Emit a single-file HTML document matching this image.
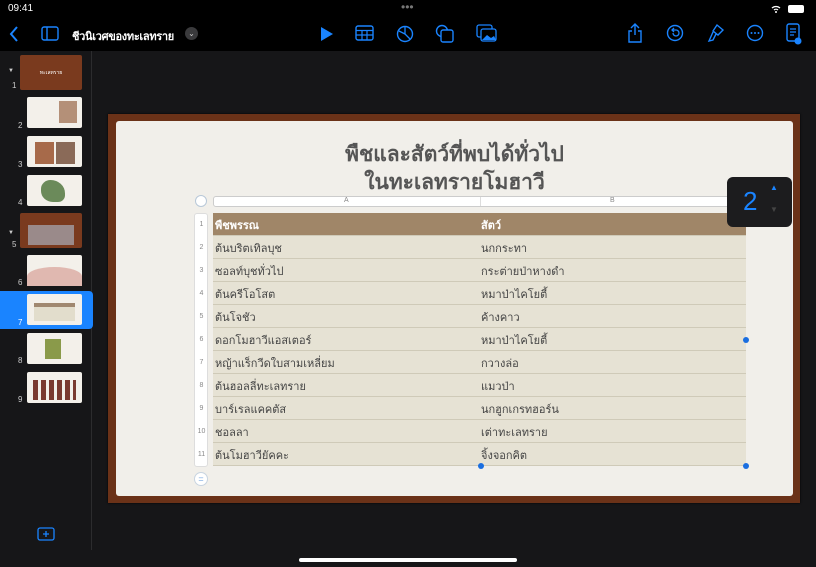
<!DOCTYPE html>
<html><head><meta charset="utf-8"><style>
*{margin:0;padding:0;box-sizing:border-box}
body{width:816px;height:567px;background:#161618;position:relative;overflow:hidden;font-family:"Liberation Sans",sans-serif;color:#fff}
.top{position:absolute;left:0;top:0;width:816px;height:51px;background:#000}
.t{position:absolute;font-size:10px;color:#fff}
.ic{position:absolute;top:25px}
.side{position:absolute;left:0;top:51px;width:92px;height:499px;background:#161618;border-right:1px solid #2c2c2e}
.th{position:absolute;border-radius:2px;background:#f3f0ea}
.num{position:absolute;font-size:8px;color:#ccc}
.sel{position:absolute;left:0;top:291px;width:93px;height:38px;background:#1a84ff;border-radius:0 4px 4px 0}
.frame{position:absolute;left:108px;top:114px;width:692px;height:389px;background:#6b3218;box-shadow:0 0 2px #000}
.slide{position:absolute;left:116px;top:121px;width:677px;height:375px;background:#f1efea;border-radius:3px}
h1{position:absolute;left:116px;width:677px;text-align:center;font-size:21px;color:#555;font-weight:bold;line-height:26px}
.row{position:absolute;left:213px;width:533px;height:23px;background:#e6e2d4;border-bottom:1px solid #cfcab8;font-size:11px;color:#444}
.row span{position:absolute;top:3px}
.rn{position:absolute;left:195px;width:13px;font-size:7px;color:#888;text-align:center}
</style></head><body>
<div class="top"></div>
<div class="t" style="left:8px;top:3px">09:41</div>
<div class="t" style="left:401px;top:0px;color:#777;font-size:12px">•••</div>
<svg class="ic" style="left:770px;top:4px" width="40" height="10"><path d="M2 4a6 6 0 0 1 8 0M4 6a3 3 0 0 1 4 0" stroke="#fff" stroke-width="1.3" fill="none"/><circle cx="6" cy="8" r="1" fill="#fff"/><rect x="18" y="1" width="16" height="8" rx="2" fill="#fff"/></svg>
<svg class="ic" style="left:8px;top:25px" width="12" height="18"><path d="M9 2L3 9l6 7" stroke="#1a84ff" stroke-width="2" fill="none"/></svg>
<svg class="ic" style="left:41px;top:26px" width="18" height="15"><rect x="1" y="1" width="16" height="13" rx="2" stroke="#1a84ff" stroke-width="1.4" fill="none"/><path d="M6 1v13" stroke="#1a84ff" stroke-width="1.4"/></svg>
<div class="t" style="left:72px;top:27px;font-size:11px;font-weight:bold;letter-spacing:-0.3px">ชีวนิเวศของทะเลทราย</div>
<div style="position:absolute;left:185px;top:27px;width:13px;height:13px;border-radius:50%;background:#3a3a3c;color:#ccc;font-size:8px;text-align:center;line-height:13px">⌄</div>
<svg class="ic" style="left:320px;top:27px" width="14" height="14"><path d="M1 0L13 7L1 14z" fill="#1a84ff"/></svg>
<svg class="ic" style="left:355px;top:25px" width="20" height="17"><rect x="1" y="1" width="17" height="14" rx="2" stroke="#1a84ff" stroke-width="1.4" fill="none"/><path d="M1 5.5h17M1 10h17M7 5.5v9.5M12 5.5v9.5" stroke="#1a84ff" stroke-width="1.2"/></svg>
<svg class="ic" style="left:396px;top:25px" width="18" height="18"><circle cx="9" cy="9" r="7.5" stroke="#1a84ff" stroke-width="1.4" fill="none"/><path d="M9 1.5V9l5 5M9 9l-6 -3" stroke="#1a84ff" stroke-width="1.3" fill="none"/></svg>
<svg class="ic" style="left:435px;top:24px" width="20" height="20"><circle cx="7" cy="7" r="5.5" stroke="#1a84ff" stroke-width="1.4" fill="none"/><rect x="6" y="6" width="12" height="12" rx="2" stroke="#1a84ff" stroke-width="1.4" fill="#000"/></svg>
<svg class="ic" style="left:476px;top:24px" width="22" height="20"><rect x="1" y="1" width="15" height="12" rx="2" stroke="#1a84ff" stroke-width="1.3" fill="none"/><rect x="5" y="5" width="15" height="12" rx="2" stroke="#1a84ff" stroke-width="1.3" fill="#000"/><path d="M6 16l5-5 4 3 3-2 2 4z" fill="#1a84ff"/></svg>
<svg class="ic" style="left:627px;top:23px" width="16" height="20"><path d="M8 1v11M4 5l4-4 4 4M5 8H2v11h12V8h-3" stroke="#1a84ff" stroke-width="1.4" fill="none"/></svg>
<svg class="ic" style="left:666px;top:24px" width="18" height="18"><circle cx="9" cy="9" r="7.5" stroke="#1a84ff" stroke-width="1.4" fill="none"/><path d="M7 6h3a3 3 0 1 1-3 3M8 4L6 6l2 2" stroke="#1a84ff" stroke-width="1.3" fill="none"/></svg>
<svg class="ic" style="left:707px;top:23px" width="18" height="20"><path d="M10 2l6 5-5 5-5-4zM6 9l-4 9 4-1 3-6" stroke="#1a84ff" stroke-width="1.4" fill="none"/></svg>
<svg class="ic" style="left:746px;top:24px" width="18" height="18"><circle cx="9" cy="9" r="7.5" stroke="#1a84ff" stroke-width="1.4" fill="none"/><circle cx="5.5" cy="9" r="1" fill="#1a84ff"/><circle cx="9" cy="9" r="1" fill="#1a84ff"/><circle cx="12.5" cy="9" r="1" fill="#1a84ff"/></svg>
<svg class="ic" style="left:786px;top:23px" width="16" height="22"><rect x="1" y="1" width="12" height="17" rx="2" stroke="#1a84ff" stroke-width="1.4" fill="none"/><path d="M4 6h6M4 9h6M4 12h4" stroke="#1a84ff" stroke-width="1.2"/><circle cx="12" cy="18" r="3.5" fill="#1a84ff"/></svg>

<div class="side"></div>
<div class="sel"></div>
<div style="position:absolute;left:8px;top:68px;font-size:6px;color:#ccc">▼</div>
<div style="position:absolute;left:8px;top:230px;font-size:6px;color:#ccc">▼</div>
<div class="th" style="left:20px;top:55px;width:62px;height:35px;background:#7a3a1e"><div style="color:#fff;font-size:5px;text-align:center;margin-top:14px">ทะเลทราย</div></div>
<div class="th" style="left:27px;top:97px;width:55px;height:31px"><div style="position:absolute;left:32px;top:4px;width:18px;height:22px;background:#b49078"></div></div>
<div class="th" style="left:27px;top:136px;width:55px;height:31px"><div style="position:absolute;left:8px;top:6px;width:40px;height:22px;background:linear-gradient(90deg,#a76a4a 48%,transparent 48%,transparent 52%,#8a6a58 52%)"></div></div>
<div class="th" style="left:27px;top:175px;width:55px;height:31px"><div style="position:absolute;left:14px;top:5px;width:24px;height:22px;background:#6b8a5a;border-radius:40% 60% 30% 50%"></div></div>
<div class="th" style="left:20px;top:213px;width:62px;height:35px;background:#7a3a1e"><div style="position:absolute;left:8px;top:12px;width:46px;height:20px;background:#9a8a8a"></div></div>
<div class="th" style="left:27px;top:255px;width:55px;height:31px"><div style="position:absolute;left:0;top:12px;width:55px;height:19px;background:#e0b8b0;border-radius:50% 50% 0 0"></div></div>
<div class="th" style="left:27px;top:294px;width:55px;height:31px"><div style="position:absolute;left:7px;top:9px;width:41px;height:4px;background:#a08870"></div><div style="position:absolute;left:7px;top:13px;width:41px;height:14px;background:#e2ddcc"></div></div>
<div class="th" style="left:27px;top:333px;width:55px;height:31px"><div style="position:absolute;left:18px;top:6px;width:16px;height:20px;background:#8a9a4a"></div></div>
<div class="th" style="left:27px;top:372px;width:55px;height:31px"><div style="position:absolute;left:6px;top:8px;width:43px;height:20px;background:repeating-linear-gradient(90deg,#7a3a30 0 5px,transparent 5px 8px)"></div></div>
<div class="num" style="left:12px;top:81px">1</div><div class="num" style="left:18px;top:121px">2</div><div class="num" style="left:18px;top:160px">3</div><div class="num" style="left:18px;top:198px">4</div><div class="num" style="left:12px;top:240px">5</div><div class="num" style="left:18px;top:278px">6</div><div class="num" style="left:18px;top:318px;color:#fff">7</div><div class="num" style="left:18px;top:356px">8</div><div class="num" style="left:18px;top:395px">9</div>
<svg style="position:absolute;left:37px;top:527px" width="18" height="14"><rect x="1" y="1" width="16" height="12" rx="2" stroke="#1a84ff" stroke-width="1.3" fill="none"/><path d="M9 4v6M6 7h6" stroke="#1a84ff" stroke-width="1.3"/></svg>

<div class="frame"></div>
<div class="slide"></div>
<h1 style="top:142px">พืชและสัตว์ที่พบได้ทั่วไป</h1>
<h1 style="top:170px">ในทะเลทรายโมฮาวี</h1>
<div style="position:absolute;left:195px;top:195px;width:12px;height:12px;border-radius:50%;border:1px solid #b8c8d8;background:#fff"></div>
<div style="position:absolute;left:213px;top:196px;width:533px;height:11px;background:#fff;border:1px solid #ccc;border-radius:3px;font-size:7px;color:#888"><span style="position:absolute;left:130px">A</span><span style="position:absolute;left:396px">B</span><span style="position:absolute;left:266px;top:0;height:9px;border-left:1px solid #ddd"></span></div>
<div style="position:absolute;left:194px;top:213px;width:14px;height:254px;background:#fff;border:1px solid #ddd;border-radius:3px"></div>
<div class="row" style="top:213px;background:#a08668;color:#fff;font-weight:bold"><span style="left:2px">พืชพรรณ</span><span style="left:268px">สัตว์</span></div>
<div class="row" style="top:236px"><span style="left:2px">ต้นบริตเทิลบุช</span><span style="left:268px">นกกระทา</span></div>
<div class="row" style="top:259px"><span style="left:2px">ซอลท์บุชทั่วไป</span><span style="left:268px">กระต่ายป่าหางดำ</span></div>
<div class="row" style="top:282px"><span style="left:2px">ต้นครีโอโสต</span><span style="left:268px">หมาป่าไคโยตี้</span></div>
<div class="row" style="top:305px"><span style="left:2px">ต้นโจชัว</span><span style="left:268px">ค้างคาว</span></div>
<div class="row" style="top:328px"><span style="left:2px">ดอกโมฮาวีแอสเตอร์</span><span style="left:268px">หมาป่าไคโยตี้</span></div>
<div class="row" style="top:351px"><span style="left:2px">หญ้าแร็กวีดใบสามเหลี่ยม</span><span style="left:268px">กวางล่อ</span></div>
<div class="row" style="top:374px"><span style="left:2px">ต้นฮอลลี่ทะเลทราย</span><span style="left:268px">แมวป่า</span></div>
<div class="row" style="top:397px"><span style="left:2px">บาร์เรลแคคตัส</span><span style="left:268px">นกฮูกเกรทฮอร์น</span></div>
<div class="row" style="top:420px"><span style="left:2px">ชอลลา</span><span style="left:268px">เต่าทะเลทราย</span></div>
<div class="row" style="top:443px"><span style="left:2px">ต้นโมฮาวียัคคะ</span><span style="left:268px">จิ้งจอกคิต</span></div>
<div class="rn" style="top:221px">1</div><div class="rn" style="top:244px">2</div><div class="rn" style="top:267px">3</div><div class="rn" style="top:290px">4</div><div class="rn" style="top:313px">5</div><div class="rn" style="top:336px">6</div><div class="rn" style="top:359px">7</div><div class="rn" style="top:382px">8</div><div class="rn" style="top:405px">9</div><div class="rn" style="top:428px">10</div><div class="rn" style="top:451px">11</div>
<div style="position:absolute;left:478px;top:463px;width:6px;height:6px;border-radius:50%;background:#1a6ee0"></div>
<div style="position:absolute;left:743px;top:463px;width:6px;height:6px;border-radius:50%;background:#1a6ee0"></div>
<div style="position:absolute;left:743px;top:337px;width:6px;height:6px;border-radius:50%;background:#1a6ee0"></div>
<div style="position:absolute;left:194px;top:472px;width:14px;height:14px;border-radius:50%;border:1px solid #c8d4e0;background:#fff;color:#7aa8e0;font-size:9px;text-align:center;line-height:12px">=</div>
<div style="position:absolute;left:727px;top:177px;width:65px;height:50px;background:#1c1c1e;border-radius:6px"><div style="position:absolute;left:16px;top:9px;font-size:26px;color:#1a84ff">2</div><div style="position:absolute;left:43px;top:6px;font-size:8px;color:#1a84ff">▲</div><div style="position:absolute;left:43px;top:28px;font-size:8px;color:#444">▼</div></div>
<div style="position:absolute;left:299px;top:558px;width:218px;height:4px;border-radius:2px;background:#fff"></div>
</body></html>
